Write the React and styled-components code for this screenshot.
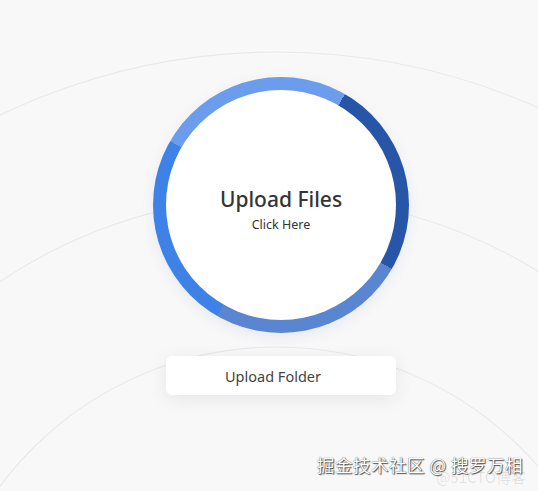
import React from "react";
import styled, { createGlobalStyle } from "styled-components";

const GlobalStyle = createGlobalStyle`
  html, body {
    margin: 0;
    padding: 0;
    background: #f8f8f9;
  }
  * {
    box-sizing: border-box;
  }
`;

const Page = styled.div`
  position: relative;
  width: 538px;
  height: 491px;
  overflow: hidden;
  background: #f8f8f9;
  font-family: "Noto Sans", "Open Sans", sans-serif;
`;

const Ripples = styled.svg`
  position: absolute;
  left: 0;
  top: 0;
  pointer-events: none;
`;

const Content = styled.div`
  position: relative;
  display: flex;
  flex-direction: column;
  align-items: center;
  padding-top: 77px;
  padding-left: 24px;
  gap: 23px;
`;

const Ring = styled.div`
  width: 256px;
  height: 256px;
  border-radius: 50%;
  padding: 13px;
  background: conic-gradient(
    from 30deg,
    #2756a8 0deg 90deg,
    #5985d1 90deg 180deg,
    #3e82e8 180deg 270deg,
    #6b9dec 270deg 360deg
  );
  box-shadow: 0 4px 14px rgba(40, 70, 130, 0.08);
`;

const Face = styled.div`
  width: 100%;
  height: 100%;
  border-radius: 50%;
  background: #fff;
  display: flex;
  flex-direction: column;
  align-items: center;
  justify-content: center;
  padding-top: 8px;
  cursor: pointer;
`;

const Title = styled.div`
  font-size: 21px;
  font-weight: 500;
  color: #353535;
  line-height: 26px;
`;

const Hint = styled.div`
  font-size: 12.5px;
  color: #333;
  line-height: 16px;
  margin-top: 5px;
`;

const FolderButton = styled.button`
  width: 230px;
  height: 39px;
  padding: 0 16px 0 0;
  border: none;
  border-radius: 6px;
  background: #fff;
  box-shadow: 0 4px 18px rgba(0, 0, 0, 0.08);
  font-family: inherit;
  font-size: 14.5px;
  color: #444;
  cursor: pointer;
`;

const Watermark = styled.div`
  position: absolute;
  right: 15px;
  bottom: 14px;
  font-family: "Noto Sans CJK SC", sans-serif;
  font-size: 17.5px;
  color: #fff;
  text-shadow: 0 0 1px #333, 1px 1px 1px #555;
  letter-spacing: 0.5px;
`;

const Ghost = styled.div`
  position: absolute;
  right: 12px;
  bottom: 4px;
  font-family: "Noto Sans CJK SC", sans-serif;
  font-size: 15px;
  color: rgba(0, 0, 0, 0.1);
`;

const App = () => {
  return (
    <>
      <GlobalStyle />
      <Page>
        <Ripples width="538" height="491" viewBox="0 0 538 491">
          {[640, 495, 345].map((r) => (
            <circle
              key={r}
              cx="277"
              cy="692"
              r={r}
              fill="none"
              stroke="#e9e9ec"
              strokeWidth="1.2"
            />
          ))}
        </Ripples>
        <Content>
          <Ring>
            <Face>
              <Title>Upload Files</Title>
              <Hint>Click Here</Hint>
            </Face>
          </Ring>
          <FolderButton>Upload Folder</FolderButton>
        </Content>
        <Ghost>@51CTO博客</Ghost>
        <Watermark>掘金技术社区 @ 搜罗万相</Watermark>
      </Page>
    </>
  );
};

export default App;
